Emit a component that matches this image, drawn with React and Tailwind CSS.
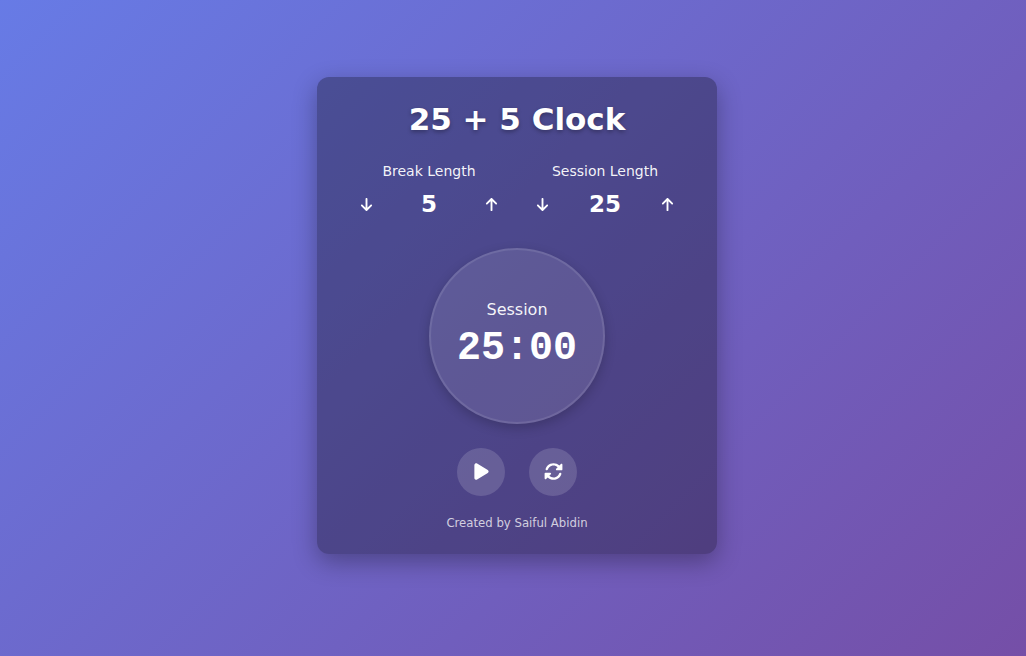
import { useState } from "react";
import { FaArrowDown, FaArrowUp, FaPlay, FaRotate } from "react-icons/fa6";

function LengthControl({ label, value, onChange }) {
  return (
    <div className="flex flex-1 flex-col items-center">
      <h2 className="mb-1.5 text-sm leading-5 text-white/95">{label}</h2>
      <div className="flex w-full items-center justify-between">
        <button type="button" aria-label={`Decrease ${label}`} onClick={() => onChange(Math.max(1, value - 1))} className="flex h-[35px] w-[34px] items-center justify-center">
          <FaArrowDown className="size-[15px]" />
        </button>
        <span className="text-[23px] leading-8 font-bold">{value}</span>
        <button type="button" aria-label={`Increase ${label}`} onClick={() => onChange(Math.min(60, value + 1))} className="flex h-[35px] w-[34px] items-center justify-center">
          <FaArrowUp className="size-[15px]" />
        </button>
      </div>
    </div>
  );
}

export default function App() {
  const [breakLength, setBreakLength] = useState(5);
  const [sessionLength, setSessionLength] = useState(25);
  return (
    <main className="flex min-h-screen items-center justify-center bg-[linear-gradient(135deg,#667eea_-7%,#764ba2_108%)] pb-[26px] pl-2 font-['DejaVu_Sans',sans-serif] text-white">
      <section className="w-full max-w-[400px] rounded-xl bg-black/30 p-6 text-center shadow-[0_8px_24px_rgba(0,0,0,0.3)]">
        <h1 className="mb-6 text-[31px] leading-9 font-bold [text-shadow:0_2px_4px_rgba(0,0,0,0.3)]">25 + 5 Clock</h1>
        <div className="mb-[26px] flex gap-4 px-2">
          <LengthControl label="Break Length" value={breakLength} onChange={setBreakLength} />
          <LengthControl label="Session Length" value={sessionLength} onChange={setSessionLength} />
        </div>
        <div className="mx-auto mb-6 flex size-44 flex-col items-center justify-center gap-[3px] rounded-full border-2 border-white/10 bg-white/10 shadow-[0_4px_12px_rgba(0,0,0,0.2)]">
          <h2 className="text-base text-white/95">Session</h2>
          <div className="font-['Liberation_Mono',monospace] text-[40px] leading-12 font-bold">
            {String(sessionLength).padStart(2, "0")}:00
          </div>
        </div>
        <div className="mb-5 flex justify-center gap-6">
          <button type="button" aria-label="Start" className="flex size-12 items-center justify-center rounded-full bg-white/15">
            <FaPlay className="size-[19px]" />
          </button>
          <button type="button" aria-label="Reset" className="flex size-12 items-center justify-center rounded-full bg-white/15">
            <FaRotate className="size-[19px]" />
          </button>
        </div>
        <p className="font-['DejaVu_Sans_Condensed','DejaVu_Sans',sans-serif] text-[13px] leading-[14px] text-white/75">Created by Saiful Abidin</p>
      </section>
    </main>
  );
}
